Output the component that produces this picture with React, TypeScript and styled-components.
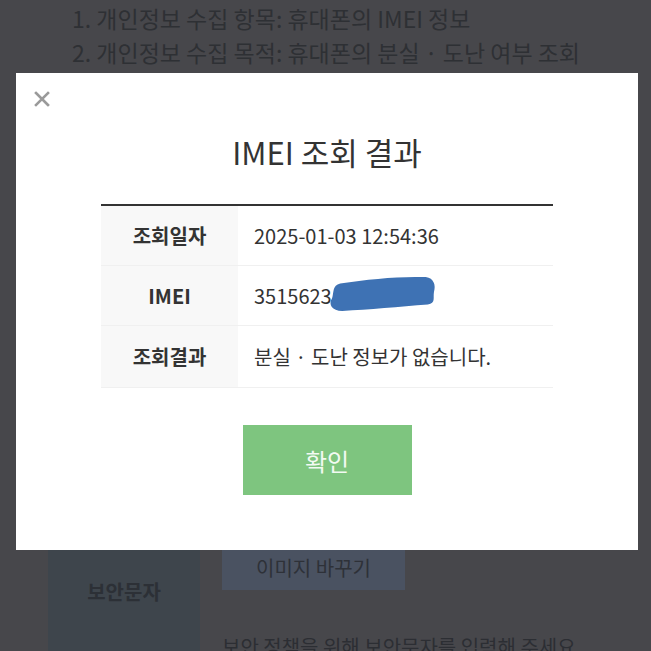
import React from 'react'
import styled, { createGlobalStyle } from 'styled-components'

const GlobalStyle = createGlobalStyle`
    html, body {
        margin: 0;
        padding: 0;
        background: #47474b;
        font-family: "Noto Sans CJK KR", "Noto Sans", sans-serif;
    }
`

// 결과 테이블 데이터
const rows = [
    { label: '조회일자', value: '2025-01-03 12:54:36' },
    { label: 'IMEI', value: '3515623', masked: true },
    { label: '조회결과', value: '분실 · 도난 정보가 없습니다.' },
]

const App: React.FC = () => {
    return (
        <>
            <GlobalStyle />
            <Page>
                <InfoList>
                    <InfoLine>1. 개인정보 수집 항목: 휴대폰의 IMEI 정보</InfoLine>
                    <InfoLine>2. 개인정보 수집 목적: 휴대폰의 분실 · 도난 여부 조회</InfoLine>
                </InfoList>
                <SecurityRow>
                    <SecurityLabel>보안문자</SecurityLabel>
                    <SecurityBody>
                        <RefreshButton>이미지 바꾸기</RefreshButton>
                        <SecurityHelp>보안 정책을 위해 보안문자를 입력해 주세요.</SecurityHelp>
                    </SecurityBody>
                </SecurityRow>
            </Page>

            <Modal>
                <CloseButton aria-label="닫기">
                    <svg width="16" height="16" viewBox="0 0 16 16">
                        <path d="M2 2 L14 14 M14 2 L2 14" stroke="#9a9a9a" strokeWidth="2.6" strokeLinecap="square" />
                    </svg>
                </CloseButton>
                <ModalTitle>IMEI 조회 결과</ModalTitle>
                <ResultTable>
                    {rows.map((row, i) => (
                        <ResultRow key={i} $last={i === rows.length - 1}>
                            <LabelCell>{row.label}</LabelCell>
                            <ValueCell>
                                {row.value}
                                {row.masked && (
                                    <Scribble width="108" height="38" viewBox="0 0 106 36" preserveAspectRatio="none">
                                        <path
                                            d="M12 8 C40 4 70 1 96 2 C104 3 106 10 104 16 C103 22 106 26 98 28 C70 30 40 33 14 34 C4 34 0 28 4 22 C6 16 4 10 12 8 Z"
                                            fill="#3e72b4"
                                        />
                                    </Scribble>
                                )}
                            </ValueCell>
                        </ResultRow>
                    ))}
                </ResultTable>
                <ConfirmButton>확인</ConfirmButton>
            </Modal>
        </>
    )
}

export default App

const Page = styled.div`
    height: 651px;
    overflow: hidden;
    padding: 1px 0 0 48px;
    box-sizing: border-box;
`

const InfoList = styled.div`
    padding-left: 24px;
`

const InfoLine = styled.div`
    font-size: 23px;
    line-height: 34px;
    color: #2e3034;
    white-space: nowrap;
`

const SecurityRow = styled.div`
    display: grid;
    grid-template-columns: 152px 1fr;
    margin-top: 451px;
    height: 200px;
`

const SecurityLabel = styled.div`
    background: #3e454c;
    height: 142px;
    display: flex;
    align-items: center;
    justify-content: center;
    font-size: 20px;
    font-weight: 700;
    color: #2c3036;
`

const SecurityBody = styled.div`
    padding: 25px 0 0 22px;
`

const RefreshButton = styled.div`
    width: 183px;
    height: 45px;
    background: #4a5261;
    color: #2e3138;
    font-size: 20px;
    display: flex;
    align-items: center;
    justify-content: center;
`

const SecurityHelp = styled.div`
    margin-top: 42px;
    font-size: 20px;
    color: #2c2e33;
    white-space: nowrap;
`

const Modal = styled.div`
    position: fixed;
    left: 16px;
    top: 73px;
    width: 622px;
    height: 477px;
    background: #ffffff;
    display: flex;
    flex-direction: column;
    align-items: center;
`

const CloseButton = styled.button`
    position: absolute;
    left: 18px;
    top: 18px;
    padding: 0;
    border: none;
    background: none;
    width: 16px;
    height: 16px;
    cursor: pointer;
`

const ModalTitle = styled.h2`
    margin: 59px 0 0;
    font-size: 31px;
    line-height: 40px;
    font-weight: 400;
    color: #333;
`

const ResultTable = styled.div`
    margin-top: 32px;
    width: 452px;
    border-top: 2px solid #333;
`

const ResultRow = styled.div<{ $last: boolean }>`
    display: grid;
    grid-template-columns: 137px 1fr;
    box-sizing: border-box;
    height: ${p => (p.$last ? 62 : 60)}px;
    border-bottom: 1px solid #f0f0f0;
`

const LabelCell = styled.div`
    background: #f8f8f8;
    display: flex;
    align-items: center;
    justify-content: center;
    font-size: 20px;
    font-weight: 700;
    color: #333;
`

const ValueCell = styled.div`
    display: flex;
    align-items: center;
    padding-left: 16px;
    font-size: 20px;
    color: #333;
`

const Scribble = styled.svg`
    margin-left: -4px;
    margin-top: -4px;
    flex-shrink: 0;
`

const ConfirmButton = styled.button`
    margin-top: 37px;
    width: 169px;
    height: 70px;
    border: none;
    background: #7ec57f;
    color: #f2faf2;
    font-family: inherit;
    font-size: 24px;
    cursor: pointer;
`
